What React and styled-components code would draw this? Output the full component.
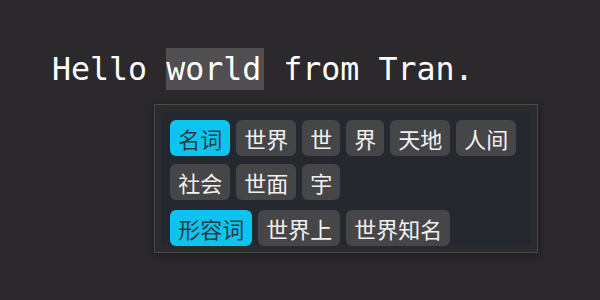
import styled, { createGlobalStyle } from "styled-components";

// Editor line with a word-suggestion popup under the selected word

const Global = createGlobalStyle`
  html, body {
    margin: 0;
    padding: 0;
    background: #2b292b;
  }
`;

const Editor = styled.div`
  width: 600px;
  height: 300px;
  box-sizing: border-box;
  padding: 48px 0 0 52px;
  background: #2b292b;
  color: #ffffff;
  font-family: "DejaVu Sans Mono", "Liberation Mono", monospace;
  font-size: 31.6px;
`;

const Line = styled.div`
  height: 42px;
  line-height: 42px;
  white-space: pre;
`;

const Word = styled.span`
  position: relative;
  display: inline-block;
  height: 42px;
  padding-right: ${(p) => (p.$selected ? "3px" : "0")};
  background: ${(p) => (p.$selected ? "#504e50" : "transparent")};
`;

const Popup = styled.div`
  position: absolute;
  top: calc(100% + 14px);
  left: -12px;
  width: 384px;
  box-sizing: border-box;
  padding: 6px;
  background: #2b2b2d;
  border: 1px solid #49494b;
  box-shadow: 0 2px 10px rgba(0, 0, 0, 0.35);
  line-height: normal;
  white-space: normal;
`;

const Panel = styled.div`
  display: flex;
  flex-direction: column;
  gap: 10px;
  padding: 9px 9px 0 9px;
  background: #262830;
  border-radius: 6px;
`;

const Group = styled.div`
  display: flex;
  flex-wrap: wrap;
  gap: 8px 6px;
`;

const Chip = styled.span`
  height: 36px;
  line-height: 36px;
  padding: 0 8px;
  border-radius: 6px;
  font-family: "Noto Sans CJK SC", "Noto Sans", sans-serif;
  font-size: 22px;
  background: ${(p) => (p.$tag ? "#0bc4ef" : "#464547")};
  color: ${(p) => (p.$tag ? "#2e3a42" : "#f2f2f2")};
`;

const groups = [
  { tag: "名词", words: ["世界", "世", "界", "天地", "人间", "社会", "世面", "宇"] },
  { tag: "形容词", words: ["世界上", "世界知名"] },
];

export default function App() {
  return (
    <>
      <Global />
      <Editor>
        <Line>
          Hello{" "}
          <Word $selected>
            world
            <Popup>
              <Panel>
                {groups.map((g) => (
                  <Group key={g.tag}>
                    <Chip $tag>{g.tag}</Chip>
                    {g.words.map((w) => (
                      <Chip key={w}>{w}</Chip>
                    ))}
                  </Group>
                ))}
              </Panel>
            </Popup>
          </Word>{" "}
          from Tran.
        </Line>
      </Editor>
    </>
  );
}
